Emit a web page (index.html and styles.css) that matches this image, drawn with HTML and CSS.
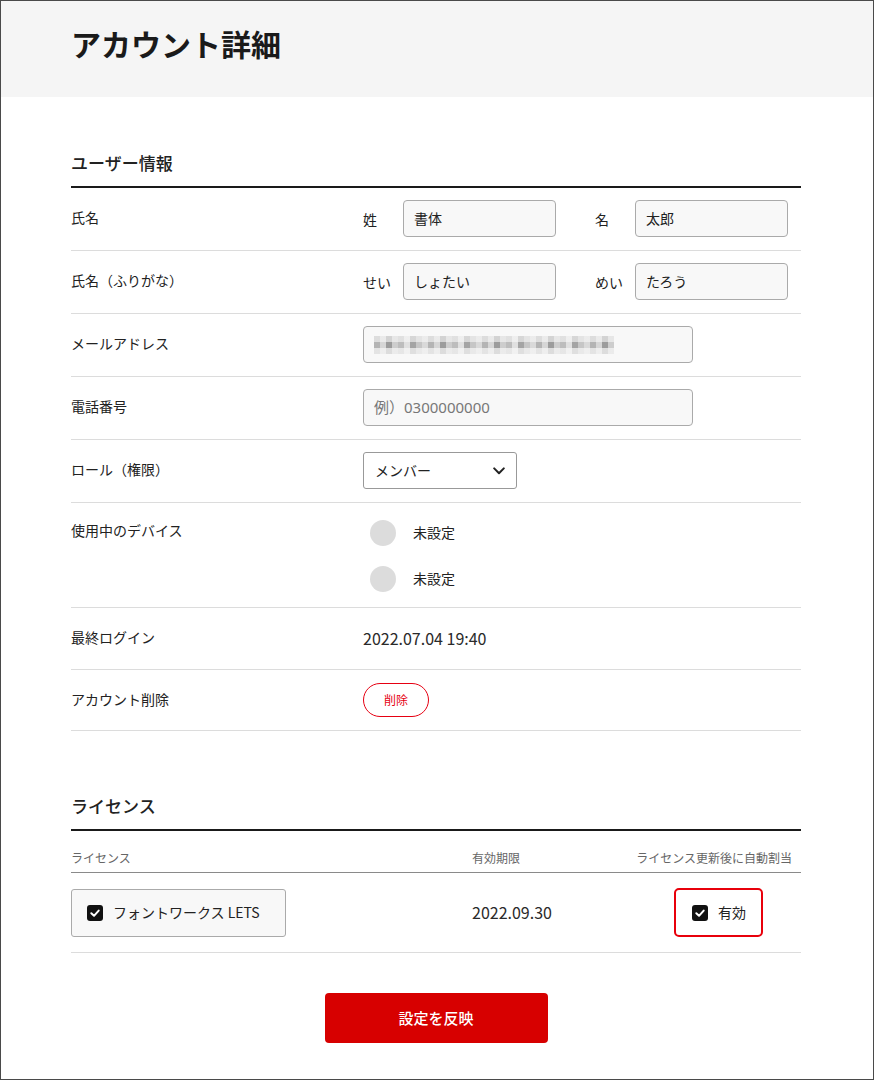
FILE: index.html
```html
<!DOCTYPE html>
<html lang="ja">
<head>
<meta charset="utf-8">
<title>アカウント詳細</title>
<link rel="stylesheet" href="styles.css">
</head>
<body>
<div class="frame">
  <header class="page-head">
    <h1 class="page-title">アカウント詳細</h1>
  </header>

  <main class="content">
    <section class="section section-user">
      <h2 class="section-title">ユーザー情報</h2>

      <div class="row">
        <div class="row-label">氏名</div>
        <div class="row-value pairs">
          <div class="pair"><span class="pair-label">姓</span><div class="field field-sm">書体</div></div>
          <div class="pair"><span class="pair-label">名</span><div class="field field-sm">太郎</div></div>
        </div>
      </div>

      <div class="row">
        <div class="row-label">氏名（ふりがな）</div>
        <div class="row-value pairs">
          <div class="pair"><span class="pair-label">せい</span><div class="field field-sm">しょたい</div></div>
          <div class="pair"><span class="pair-label">めい</span><div class="field field-sm">たろう</div></div>
        </div>
      </div>

      <div class="row">
        <div class="row-label">メールアドレス</div>
        <div class="row-value">
          <div class="field field-lg"><span class="mosaic"></span></div>
        </div>
      </div>

      <div class="row">
        <div class="row-label">電話番号</div>
        <div class="row-value">
          <div class="field field-lg placeholder">例）0300000000</div>
        </div>
      </div>

      <div class="row">
        <div class="row-label">ロール（権限）</div>
        <div class="row-value">
          <div class="select">
            <span>メンバー</span>
            <svg class="chevron" width="12" height="8" viewBox="0 0 12 8"><path d="M1.2 1.4 L6 6.2 L10.8 1.4" fill="none" stroke="#222" stroke-width="2" stroke-linecap="round" stroke-linejoin="round"/></svg>
          </div>
        </div>
      </div>

      <div class="row row-top">
        <div class="row-label">使用中のデバイス</div>
        <div class="row-value devices">
          <div class="device"><span class="device-dot"></span><span>未設定</span></div>
          <div class="device"><span class="device-dot"></span><span>未設定</span></div>
        </div>
      </div>

      <div class="row row-text">
        <div class="row-label">最終ログイン</div>
        <div class="row-value datetime">2022.07.04 19:40</div>
      </div>

      <div class="row row-btn">
        <div class="row-label">アカウント削除</div>
        <div class="row-value">
          <button class="btn-delete" type="button">削除</button>
        </div>
      </div>
    </section>

    <section class="section section-license">
      <h2 class="section-title">ライセンス</h2>
      <div class="lic-head">
        <div class="lic-col1">ライセンス</div>
        <div class="lic-col2">有効期限</div>
        <div class="lic-col3">ライセンス更新後に自動割当</div>
      </div>
      <div class="lic-row">
        <div class="lic-col1">
          <div class="lic-box">
            <svg class="check" width="16" height="16" viewBox="0 0 16 16"><rect x="0" y="0" width="16" height="16" rx="3" fill="#111"/><path d="M4.3 8.3 L7 10.8 L11.7 5.6" fill="none" stroke="#fff" stroke-width="2" stroke-linecap="round" stroke-linejoin="round"/></svg>
            <span>フォントワークス LETS</span>
          </div>
        </div>
        <div class="lic-col2 lic-date">2022.09.30</div>
        <div class="lic-col3">
          <div class="auto-box">
            <svg class="check" width="16" height="16" viewBox="0 0 16 16"><rect x="0" y="0" width="16" height="16" rx="3" fill="#111"/><path d="M4.3 8.3 L7 10.8 L11.7 5.6" fill="none" stroke="#fff" stroke-width="2" stroke-linecap="round" stroke-linejoin="round"/></svg>
            <span>有効</span>
          </div>
        </div>
      </div>
    </section>

    <div class="actions">
      <button class="btn-submit" type="button">設定を反映</button>
    </div>
  </main>
</div>
</body>
</html>
```

FILE: styles.css
```css
* { box-sizing: border-box; }

html, body {
  margin: 0;
  padding: 0;
  background: #fff;
}

body {
  font-family: "Noto Sans CJK JP", "Noto Sans", sans-serif;
  color: #222;
  font-size: 14px;
}

.frame {
  width: 874px;
  height: 1080px;
  border: 1px solid #4a4a4a;
  overflow: hidden;
}

.page-head {
  background: #f5f5f5;
  height: 96px;
  padding-left: 70px;
  display: flex;
  align-items: center;
}

.page-title {
  margin: 0;
  margin-top: -12px;
  font-size: 30px;
  font-weight: 700;
  line-height: 40px;
  color: #1a1a1a;
}

.content {
  padding: 0 72px 0 70px;
}

.section-title {
  margin: 0;
  font-size: 17px;
  font-weight: 500;
  line-height: 24px;
  padding-bottom: 11px;
  border-bottom: 2px solid #1a1a1a;
}

.section-user { margin-top: 54px; }
.section-license { margin-top: 63px; }

.row {
  display: grid;
  grid-template-columns: 292px 1fr;
  align-items: center;
  min-height: 63px;
  padding: 12px 0 13px;
  border-bottom: 1px solid #dcdcdc;
}

.row-label {
  font-size: 14px;
  line-height: 20px;
  margin-top: -3px;
}

.row-value {
  display: flex;
  align-items: center;
}

.pairs { gap: 39px; }

.pair {
  display: flex;
  align-items: center;
}

.pair-label {
  width: 40px;
  font-size: 14px;
}

.field {
  height: 37px;
  border: 1px solid #aaa;
  border-radius: 4px;
  background: #f8f8f8;
  padding: 0 10px 2px;
  display: flex;
  align-items: center;
  font-size: 14px;
  color: #222;
}

.field-sm { width: 153px; }
.field-lg { width: 330px; }

.placeholder {
  color: #777;
  font-size: 15px;
  font-family: "Noto Sans", "Noto Sans CJK JP", sans-serif;
}

.mosaic {
  display: block;
  width: 240px;
  height: 18px;
  margin-top: 2px;
  background:
    linear-gradient(to bottom, rgba(248,248,248,0.6) 0 6px, transparent 6px 12px, rgba(248,248,248,0.7) 12px),
    repeating-linear-gradient(90deg, #b4b4b4 0 6px, #d6d6d6 6px 12px, #9c9c9c 12px 18px, #cdcdcd 18px 24px, #bdbdbd 24px 30px, #e0e0e0 30px 36px, #a4a4a4 36px 42px, #c6c6c6 42px 48px, #d9d9d9 48px 54px);
}

.select {
  width: 154px;
  height: 37px;
  border: 1px solid #999;
  border-radius: 3px;
  background: #fff;
  padding: 0 11px 2px 11px;
  display: flex;
  align-items: center;
  justify-content: space-between;
  font-size: 14px;
}

.chevron { margin-top: 2px; }

.row-top {
  align-items: start;
  padding: 17px 0 15px;
}

.row-top .row-label { line-height: 26px; }

.devices {
  flex-direction: column;
  align-items: flex-start;
  gap: 20px;
}

.device {
  display: flex;
  align-items: center;
  gap: 17px;
  padding-left: 7px;
  height: 26px;
  font-size: 14px;
}

.device span:last-child { margin-top: -2px; }

.device-dot {
  width: 26px;
  height: 26px;
  border-radius: 50%;
  background: #dcdcdc;
}

.row-text {
  min-height: 62px;
  padding: 0;
}

.datetime {
  font-size: 16px;
  font-weight: 400;
  margin-top: -2px;
  color: #2a2a2a;
}

.row-btn {
  min-height: 61px;
  padding: 0;
}

.btn-delete {
  width: 66px;
  height: 34px;
  border: 1px solid #e60012;
  border-radius: 17px;
  background: #fff;
  color: #e60012;
  font-family: inherit;
  font-size: 12px;
  padding: 0 0 2px;
}

.lic-head,
.lic-row {
  display: grid;
  grid-template-columns: 401px 159px 170px;
}

.lic-head {
  height: 42px;
  align-items: end;
  padding-bottom: 5px;
  border-bottom: 1px solid #8a8a8a;
  font-size: 12px;
  color: #666;
  line-height: 18px;
}

.lic-head .lic-col3 {
  white-space: nowrap;
  justify-self: end;
  margin-right: 9px;
}

.lic-row {
  align-items: center;
  padding: 15px 0 15px;
  border-bottom: 1px solid #dcdcdc;
}

.lic-box {
  width: 215px;
  height: 48px;
  border: 1px solid #aaa;
  border-radius: 3px;
  background: #f8f8f8;
  display: flex;
  align-items: center;
  gap: 10px;
  padding-left: 15px;
  font-size: 14px;
}

.lic-box span, .auto-box span { margin-top: -2px; }

.check { flex: none; }

.lic-date {
  font-size: 16px;
  font-weight: 400;
  margin-top: -2px;
  color: #2a2a2a;
}

.lic-col3 {
  display: flex;
}

.auto-box {
  margin-left: 43px;
  width: 89px;
  height: 49px;
  border: 2px solid #e8000b;
  border-radius: 5px;
  display: flex;
  align-items: center;
  gap: 10px;
  padding-left: 16px;
  font-size: 14px;
}

.actions {
  display: flex;
  justify-content: center;
  padding-top: 40px;
}

.btn-submit {
  width: 223px;
  height: 50px;
  border: none;
  border-radius: 4px;
  background: #d70000;
  color: #fff;
  font-family: inherit;
  font-size: 15px;
  font-weight: 500;
  padding: 0 0 2px;
}
```
